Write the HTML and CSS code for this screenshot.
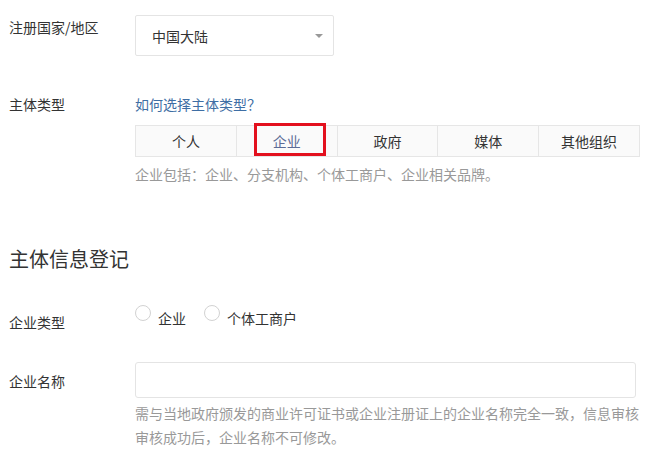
FILE: index.html
```html
<!DOCTYPE html>
<html lang="zh-CN">
<head>
<meta charset="utf-8">
<title>主体信息登记</title>
<link rel="stylesheet" href="styles.css">
</head>
<body>
<div class="page">
  <div class="row row-country">
    <div class="label">注册国家/地区</div>
    <div class="field">
      <div class="select">
        <span class="select-value">中国大陆</span>
        <span class="select-arrow"></span>
      </div>
    </div>
  </div>

  <div class="row row-type">
    <div class="label">主体类型</div>
    <div class="field">
      <a class="link" href="#">如何选择主体类型？</a>
      <div class="tabs">
        <div class="tab">个人</div>
        <div class="tab active">企业<span class="mark"></span></div>
        <div class="tab">政府</div>
        <div class="tab">媒体</div>
        <div class="tab">其他组织</div>
      </div>
      <div class="hint">企业包括：企业、分支机构、个体工商户、企业相关品牌。</div>
    </div>
  </div>

  <h2 class="section-title">主体信息登记</h2>

  <div class="row row-kind">
    <div class="label">企业类型</div>
    <div class="field radios">
      <label class="radio"><span class="circle"></span><span class="radio-text">企业</span></label>
      <label class="radio"><span class="circle"></span><span class="radio-text">个体工商户</span></label>
    </div>
  </div>

  <div class="row row-name">
    <div class="label">企业名称</div>
    <div class="field">
      <div class="input"></div>
      <div class="hint hint-long">需与当地政府颁发的商业许可证书或企业注册证上的企业名称完全一致，信息审核审核成功后，企业名称不可修改。</div>
    </div>
  </div>
</div>
</body>
</html>
```

FILE: styles.css
```css
html, body {
  margin: 0;
  padding: 0;
  background: #ffffff;
}

body {
  font-family: "Noto Sans CJK SC", "Noto Sans", sans-serif;
  font-size: 14px;
  color: #333333;
  overflow: hidden;
}

.page {
  width: 648px;
  height: 466px;
  overflow: hidden;
}

.row {
  display: flex;
  align-items: flex-start;
}

.label {
  width: 126px;
  padding-left: 9px;
  flex: none;
  line-height: 20px;
  color: #333333;
  white-space: nowrap;
}

.field {
  flex: none;
}

/* country select */
.row-country {
  margin-top: 15px;
}

.row-country .label {
  padding-top: 2px;
}

.select {
  box-sizing: border-box;
  width: 199px;
  height: 41px;
  border: 1px solid #e4e4e4;
  border-radius: 2px;
  display: flex;
  align-items: center;
  justify-content: space-between;
  padding: 0 10px 0 16px;
}

.select-value {
  line-height: 20px;
  color: #333333;
  padding-top: 0;
}

.select-arrow {
  width: 0;
  height: 0;
  border-left: 4px solid transparent;
  border-right: 4px solid transparent;
  border-top: 4px solid #999999;
  margin-top: 1px;
}

/* subject type */
.row-type {
  margin-top: 38px;
}

.link {
  display: block;
  line-height: 20px;
  color: #3e6ea4;
  text-decoration: none;
}

.tabs {
  margin-top: 11px;
  display: flex;
  width: 505px;
  box-sizing: border-box;
  border: 1px solid #e6e6e6;
  background: #fafafa;
}

.tab {
  position: relative;
  flex: 1;
  height: 30px;
  line-height: 30px;
  text-align: center;
  color: #333333;
  border-left: 1px solid #e6e6e6;
}

.tab:first-child {
  border-left: none;
}

.tab.active {
  color: #5b6b96;
}

.mark {
  position: absolute;
  left: 17px;
  top: -3px;
  width: 66px;
  height: 27px;
  border: 3px solid #e3101e;
}

.hint {
  margin-top: 6px;
  line-height: 22px;
  color: #999999;
  white-space: nowrap;
}

/* section title */
.section-title {
  margin: 60px 0 0 9px;
  font-size: 20px;
  font-weight: normal;
  line-height: 28px;
  color: #333333;
}

/* radios */
.row-kind {
  margin-top: 39px;
}

.radios {
  display: flex;
  gap: 18px;
  margin-top: -7px;
}

.radio {
  display: flex;
  align-items: flex-start;
  gap: 7px;
}

.circle {
  box-sizing: border-box;
  width: 16px;
  height: 16px;
  border: 1px solid #d2d2d2;
  border-radius: 50%;
  background: #ffffff;
}

.radio-text {
  line-height: 20px;
  margin-top: 3px;
  color: #333333;
}

/* name */
.row-name {
  margin-top: 30px;
}

.row-name .label {
  padding-top: 9px;
}

.input {
  box-sizing: border-box;
  width: 501px;
  height: 36px;
  border: 1px solid #e4e4e4;
  border-radius: 3px;
  background: #ffffff;
}

.hint-long {
  margin-top: 3px;
  width: 506px;
  line-height: 24px;
  white-space: normal;
}
```
